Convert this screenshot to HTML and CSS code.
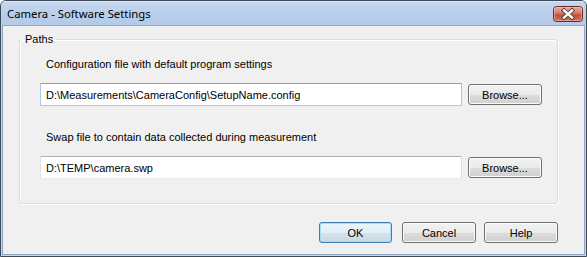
FILE: index.html
```html
<!DOCTYPE html>
<html>
<head>
<meta charset="utf-8">
<title>Camera - Software Settings</title>
<link rel="stylesheet" href="styles.css">
</head>
<body>
<div class="window">
  <div class="titlebar">
    <span class="title">Camera - Software Settings</span>
    <button class="close" aria-label="Close">
      <svg width="30" height="16" viewBox="0 0 30 16">
        <defs>
          <linearGradient id="cg" x1="0" y1="0" x2="0" y2="1">
            <stop offset="0" stop-color="#e9b2a6"/>
            <stop offset="0.45" stop-color="#d47966"/>
            <stop offset="0.55" stop-color="#c3513c"/>
            <stop offset="1" stop-color="#d0715a"/>
          </linearGradient>
        </defs>
        <rect x="0.5" y="0.5" width="29" height="15" rx="3" ry="3" fill="url(#cg)" stroke="#6b2a22"/>
        <rect x="1.5" y="1.5" width="27" height="13" rx="2" ry="2" fill="none" stroke="#f0c4ba" stroke-opacity="0.6"/>
        <path d="M11 4.5 L19 11.5 M19 4.5 L11 11.5" stroke="#4d3a3a" stroke-width="4.2" stroke-linecap="square"/>
        <path d="M11 4.5 L19 11.5 M19 4.5 L11 11.5" stroke="#ffffff" stroke-width="2.4" stroke-linecap="square"/>
      </svg>
    </button>
  </div>
  <div class="client">
    <fieldset class="group">
      <legend class="legend">Paths</legend>
      <div class="label first">Configuration file with default program settings</div>
      <div class="row">
        <input class="field focused" type="text" value="D:\Measurements\CameraConfig\SetupName.config">
        <button class="btn browse">Browse...</button>
      </div>
      <div class="label second">Swap file to contain data collected during measurement</div>
      <div class="row">
        <input class="field" type="text" value="D:\TEMP\camera.swp">
        <button class="btn browse">Browse...</button>
      </div>
    </fieldset>
    <div class="actions">
      <button class="btn default ok">OK</button>
      <button class="btn cancel">Cancel</button>
      <button class="btn help">Help</button>
    </div>
  </div>
</div>
</body>
</html>
```

FILE: styles.css
```css
* { box-sizing: border-box; }

html, body {
  margin: 0;
  padding: 0;
  background: #ffffff;
}

body {
  font-family: "Liberation Sans", Arial, sans-serif;
  font-size: 11px;
  color: #000000;
}

.window {
  width: 587px;
  height: 257px;
  border: 1px solid #3f4a57;
  border-radius: 6px 6px 0 0;
  background: #c2d6ee;
  display: flex;
  flex-direction: column;
  overflow: hidden;
}

.titlebar {
  height: 24px;
  flex: none;
  display: flex;
  align-items: center;
  justify-content: space-between;
  padding: 0 3px 0 6px;
  background: linear-gradient(to bottom, #c6d9f0 0%, #b9cfeb 50%, #b2cae8 100%);
  box-shadow: inset 0 1px 0 #dde9f7;
}

.title {
  font-family: "Noto Sans", "Open Sans", sans-serif;
  font-size: 11.3px;
  line-height: 15px;
  color: #000000;
  margin-top: 1px;
}

.close {
  width: 30px;
  height: 16px;
  padding: 0;
  margin: 0;
  border: none;
  background: none;
  display: block;
  margin-top: 1px;
}

.close svg { display: block; }

.client {
  flex: 1;
  margin: 0 1px 1px 1px;
  border: 1px solid #8ea6c4;
  background: #f0f0f0;
  padding: 6px 26px 0 16px;
  display: flex;
  flex-direction: column;
}

.group {
  margin: 0;
  width: 539px;
  padding: 0 15px 24px 20px;
  border: 1px solid #d5dfe5;
  border-radius: 3px;
  box-shadow: inset 1px 1px 0 #ffffff, 1px 1px 0 #ffffff;
}

.legend {
  margin-left: -18px;
  padding: 0 3px;
  line-height: 15px;
  font-size: 11px;
}

.label {
  line-height: 15px;
  padding-left: 6px;
}

.label.first { margin-top: 10px; }
.label.second { margin-top: 24px; }

.row {
  display: flex;
  align-items: center;
  gap: 6px;
  margin-top: 11px;
}

.field {
  width: 422px;
  height: 23px;
  margin: 0;
  padding: 0 5px;
  font-family: inherit;
  font-size: 11px;
  color: #000000;
  background: #ffffff;
  border: 1px solid #dbdfe6;
  border-top-color: #abadb3;
  border-bottom-color: #e3e9ef;
  border-radius: 1px;
  outline: none;
}

.field.focused {
  border-color: #a9c8e8;
  border-top-color: #7da2ce;
}

.btn {
  height: 21px;
  margin: 0;
  padding: 0;
  font-family: inherit;
  font-size: 11px;
  color: #000000;
  border: 1px solid #707070;
  border-radius: 3px;
  background: linear-gradient(to bottom, #f2f2f2 0%, #ebebeb 50%, #dddddd 51%, #cfcfcf 100%);
  box-shadow: inset 0 0 0 1px #fbfbfb;
}

.browse { width: 74px; }

.actions {
  display: flex;
  justify-content: flex-end;
  margin-top: 18px;
  width: 539px;
}

.ok { width: 73px; margin-right: 10px; }
.cancel { width: 74px; margin-right: 8px; }
.help { width: 74px; }

.default {
  border-color: #3c7fb1;
  box-shadow: inset 0 0 0 1px #a8dcf7;
  background: linear-gradient(to bottom, #eaf6fd 0%, #e3eff7 50%, #d5e3ec 51%, #c9d8e3 100%);
}
```
